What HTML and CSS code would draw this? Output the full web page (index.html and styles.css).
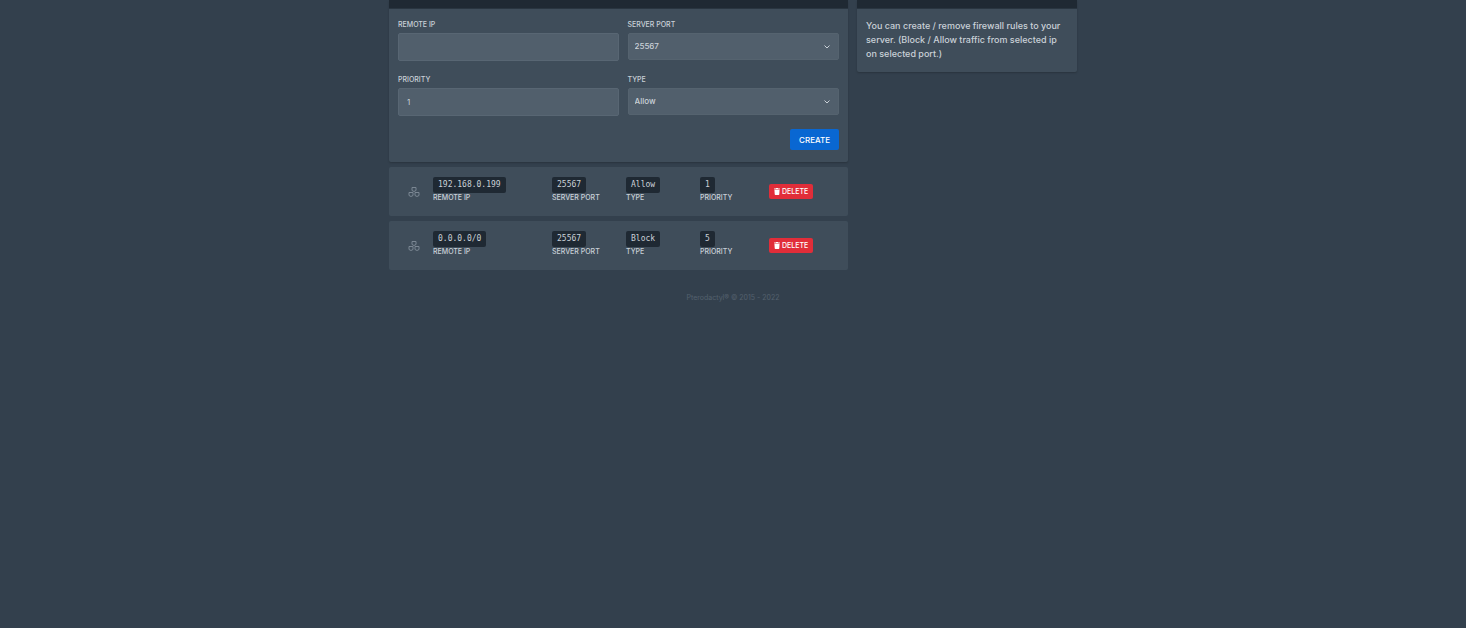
FILE: index.html
```html
<!DOCTYPE html>
<html lang="en">
<head>
  <meta charset="UTF-8">
  <meta name="viewport" content="width=device-width, initial-scale=1.0">
  <title>Firewall</title>
  <link rel="stylesheet" href="styles.css">
</head>
<body>

  <!-- Shared icons -->
  <svg class="sprite" aria-hidden="true">
    <symbol id="icon-network" viewBox="0 0 12 11">
      <g fill="none" stroke="currentColor" stroke-linejoin="round">
        <path d="M4 1.500h4v3L6 5.500L4 4.500z"/>
        <path d="M1 6.500h4v3L3 10.500L1 9.500z"/>
        <path d="M7 6.500h4v3L9 10.500L7 9.500z"/>
      </g>
    </symbol>
    <symbol id="icon-trash" viewBox="0 0 448 512">
      <path fill="currentColor" d="M432 32H312l-9-19a24 24 0 0 0-22-13H167a24 24 0 0 0-22 13l-9 19H16A16 16 0 0 0 0 48v32a16 16 0 0 0 16 16h416a16 16 0 0 0 16-16V48a16 16 0 0 0-16-16zM32 128l21 339a48 48 0 0 0 48 45h246a48 48 0 0 0 48-45l21-339z"/>
    </symbol>
  </svg>

  <div class="container">
    <main class="rules">
      <section class="card">
        <div class="card-header"></div>
        <form class="rule-form">
          <div class="field">
            <label for="remote-ip">Remote IP</label>
            <input type="text" id="remote-ip">
          </div>
          <div class="field">
            <label for="server-port">Server Port</label>
            <div class="select-wrap">
              <select id="server-port"><option>25567</option></select>
              <svg class="chevron" viewBox="0 0 6 4"><path d="M.5 .5L3 3L5.500 .5"/></svg>
            </div>
          </div>
          <div class="field">
            <label for="priority">Priority</label>
            <input type="text" id="priority" value="1">
          </div>
          <div class="field">
            <label for="type">Type</label>
            <div class="select-wrap">
              <select id="type"><option>Allow</option><option>Block</option></select>
              <svg class="chevron" viewBox="0 0 6 4"><path d="M.5 .5L3 3L5.500 .5"/></svg>
            </div>
          </div>
          <button type="submit" class="create">Create</button>
        </form>
      </section>

      <!-- Existing rules -->
      <div class="rule">
        <svg class="network"><use href="#icon-network"/></svg>
        <div class="cell cell-ip"><code>192.168.0.199</code><p>Remote IP</p></div>
        <div class="cell"><code>25567</code><p>Server Port</p></div>
        <div class="cell"><code>Allow</code><p>Type</p></div>
        <div class="cell"><code>1</code><p>Priority</p></div>
        <button type="button" class="delete"><svg><use href="#icon-trash"/></svg>Delete</button>
      </div>
      <div class="rule">
        <svg class="network"><use href="#icon-network"/></svg>
        <div class="cell cell-ip"><code>0.0.0.0/0</code><p>Remote IP</p></div>
        <div class="cell"><code>25567</code><p>Server Port</p></div>
        <div class="cell"><code>Block</code><p>Type</p></div>
        <div class="cell"><code>5</code><p>Priority</p></div>
        <button type="button" class="delete"><svg><use href="#icon-trash"/></svg>Delete</button>
      </div>
    </main>

    <aside class="card help">
      <div class="card-header"></div>
      <p>You can create / remove firewall rules to your server. (Block / Allow traffic from selected ip on selected port.)</p>
    </aside>
  </div>

  <footer>Pterodactyl® © 2015 - 2022</footer>

</body>
</html>
```
FILE: styles.css
```css
* {
  box-sizing: border-box;
}

body {
  margin: 0;
  background-color: #33404d;
  color: #cad1d8;
  font-family: Inter, "Open Sans", sans-serif;
  font-size: 8px;
}

p {
  margin: 0;
}

.sprite {
  display: none;
}

.container {
  display: flex;
  align-items: flex-start;
  gap: 9px;
  max-width: 688px;
  margin: 0 auto;
}

.rules {
  flex: 1;
  min-width: 0;
}

.card {
  background-color: #3f4d5a;
  border-radius: 2px;
  box-shadow: 0 1px 2px rgba(0, 0, 0, 0.2);
}

.card-header {
  height: 9px;
  background-color: #1f2933;
  border-bottom: 1px solid #293540;
}

/* Create form */
.rule-form {
  display: grid;
  grid-template-columns: 220fr 211fr;
  column-gap: 9px;
  row-gap: 14px;
  padding: 10px 9px 12px;
}

.field {
  height: 41px;
}

.field label,
.cell p {
  display: block;
  font-size: 7px;
  font-weight: 500;
  line-height: 10px;
  text-transform: uppercase;
}

.field label {
  padding-top: 1px;
  margin-bottom: 3px;
}

input,
select {
  display: block;
  width: 100%;
  height: 28px;
  padding: 0 8px;
  background-color: #515f6c;
  border: 1px solid #586673;
  border-radius: 2px;
  color: #cad1d8;
  font: inherit;
}

select {
  height: 27px;
  padding: 0 6px 2px;
  appearance: none;
  border-color: #55636f;
  font-weight: 500;
}

.select-wrap {
  position: relative;
}

.chevron {
  position: absolute;
  top: 12px;
  right: 9px;
  width: 6px;
  height: 4px;
  fill: none;
  stroke: #cad1d8;
  pointer-events: none;
}

button {
  border: 0;
  border-radius: 2px;
  color: #fff;
  font: inherit;
  font-weight: 500;
  text-transform: uppercase;
}

.create {
  grid-column: 2;
  justify-self: end;
  height: 21px;
  padding: 0 9px;
  background-color: #0967d2;
}

/* Rule rows */
.rule {
  display: flex;
  align-items: center;
  height: 49px;
  margin-top: 5px;
  padding: 0 19px;
  background-color: #3f4d5a;
  border-radius: 2px;
}

.network {
  width: 12px;
  height: 11px;
  margin-right: 13px;
  color: #7b8793;
}

.cell {
  width: 74px;
  padding-bottom: 3px;
}

.cell-ip {
  width: 119px;
}

.cell code {
  display: block;
  width: fit-content;
  padding: 0 5px;
  background-color: #1f2933;
  border-radius: 2px;
  font-family: "DejaVu Sans Mono", monospace;
  font-size: 8px;
  line-height: 16px;
}

.delete {
  display: flex;
  align-items: center;
  gap: 2px;
  height: 15px;
  margin-left: -5px;
  padding: 0 5px;
  background-color: #e12d39;
  font-size: 7px;
}

.delete svg {
  width: 6px;
  height: 7px;
}

/* Help box */
.help {
  width: 220px;
}

.help p {
  padding: 10px 9px 11px;
  font-size: 9px;
  font-weight: 500;
  line-height: 14px;
}

footer {
  margin-top: 22px;
  color: #53616e;
  font-size: 7px;
  line-height: 11px;
  text-align: center;
}
```
